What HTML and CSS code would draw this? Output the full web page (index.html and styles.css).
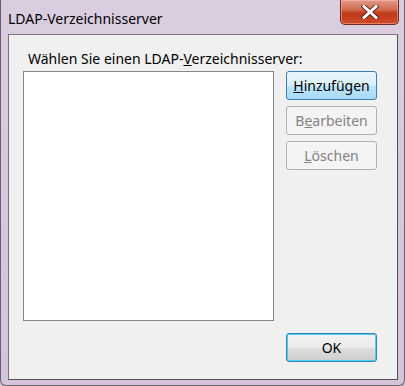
FILE: index.html
```html
<!DOCTYPE html>
<html lang="de">
<head>
    <meta charset="UTF-8">
    <meta name="viewport" content="width=device-width, initial-scale=1.0">
    <title>LDAP-Verzeichnisserver</title>
    <link rel="stylesheet" href="styles.css">
</head>
<body>
    <div class="window">
        <div class="titlebar">
            <span class="title">LDAP-Verzeichnisserver</span>
            <div class="close-btn">
                <svg width="22" height="14" viewBox="0 0 22 14">
                    <path d="M5 1.5 L17 12.5 M17 1.5 L5 12.5" stroke="#5a1a10" stroke-width="4.6" stroke-linecap="square"/>
                    <path d="M5 1.5 L17 12.5 M17 1.5 L5 12.5" stroke="#ffffff" stroke-width="3" stroke-linecap="square"/>
                </svg>
            </div>
        </div>

        <div class="client">
            <div class="prompt">Wählen Sie einen LDAP-<u>V</u>erzeichnisserver:</div>

            <div class="main-row">
                <div class="listbox"></div>
                <div class="side-buttons">
                    <button class="btn btn-hot"><u>H</u>inzufügen</button>
                    <button class="btn" disabled>B<u>e</u>arbeiten</button>
                    <button class="btn" disabled><u>L</u>öschen</button>
                </div>
            </div>

            <div class="footer">
                <button class="btn btn-default">OK</button>
            </div>
        </div>
    </div>
</body>
</html>
```

FILE: styles.css
```css
body {
    margin: 0;
    font-family: "Noto Sans", "Open Sans", sans-serif;
    font-size: 14px;
    background-color: #cfc3d3;
}
.window {
    width: 405px;
    height: 386px;
    box-sizing: border-box;
    background: linear-gradient(#dbcde0, #d4c3d9);
    border: 1px solid #6a5f70;
    border-top: none;
    border-radius: 0 0 6px 6px;
    padding: 0 6px 5px 7px;
    display: flex;
    flex-direction: column;
}
.titlebar {
    height: 35px;
    display: flex;
    justify-content: space-between;
    align-items: flex-start;
}
.title {
    margin-top: 9px;
    color: #000;
    font-size: 14px;
}
.close-btn {
    width: 59px;
    height: 25px;
    margin-right: -1px;
    box-sizing: border-box;
    border: 1px solid #6b2a22;
    border-top: none;
    border-radius: 0 0 5px 5px;
    background: linear-gradient(#e39a88 0%, #d16a50 40%, #bf3a1a 55%, #cf4a28 100%);
    box-shadow: inset 0 0 0 1px rgba(255, 200, 180, 0.45);
    display: flex;
    align-items: center;
    justify-content: center;
}
.client {
    flex: 1;
    background-color: #f0f0f0;
    border: 1px solid #7b7480;
    border-right-color: #55505a;
    border-bottom-color: #55505a;
    padding: 14px 20px 17px 14px;
    display: flex;
    flex-direction: column;
}
.prompt {
    margin-left: 5px;
    height: 22px;
    color: #000;
}
.main-row {
    display: flex;
    gap: 12px;
}
.listbox {
    width: 249px;
    height: 248px;
    background-color: #fff;
    border: 1px solid #828790;
}
.side-buttons {
    display: flex;
    flex-direction: column;
    gap: 6px;
}
.btn {
    width: 91px;
    height: 29px;
    font-family: inherit;
    font-size: 14px;
    color: #000;
    border: 1px solid #707070;
    border-radius: 3px;
    background: linear-gradient(#f2f2f2 0%, #ebebeb 50%, #dddddd 51%, #cfcfcf 100%);
    padding: 0;
}
.btn:disabled {
    color: #838383;
    border-color: #adb2b5;
    background: #f4f4f4;
}
.btn-hot {
    border-color: #3c7fb1;
    background: linear-gradient(#eaf6fd 0%, #d9f0fc 50%, #bee6fd 51%, #a7d9f5 100%);
}
.footer {
    display: flex;
    justify-content: flex-end;
    margin-top: 12px;
}
.btn-default {
    border-color: #3c7fb1;
    box-shadow: inset 0 0 0 1px #48d0f8;
}
```
